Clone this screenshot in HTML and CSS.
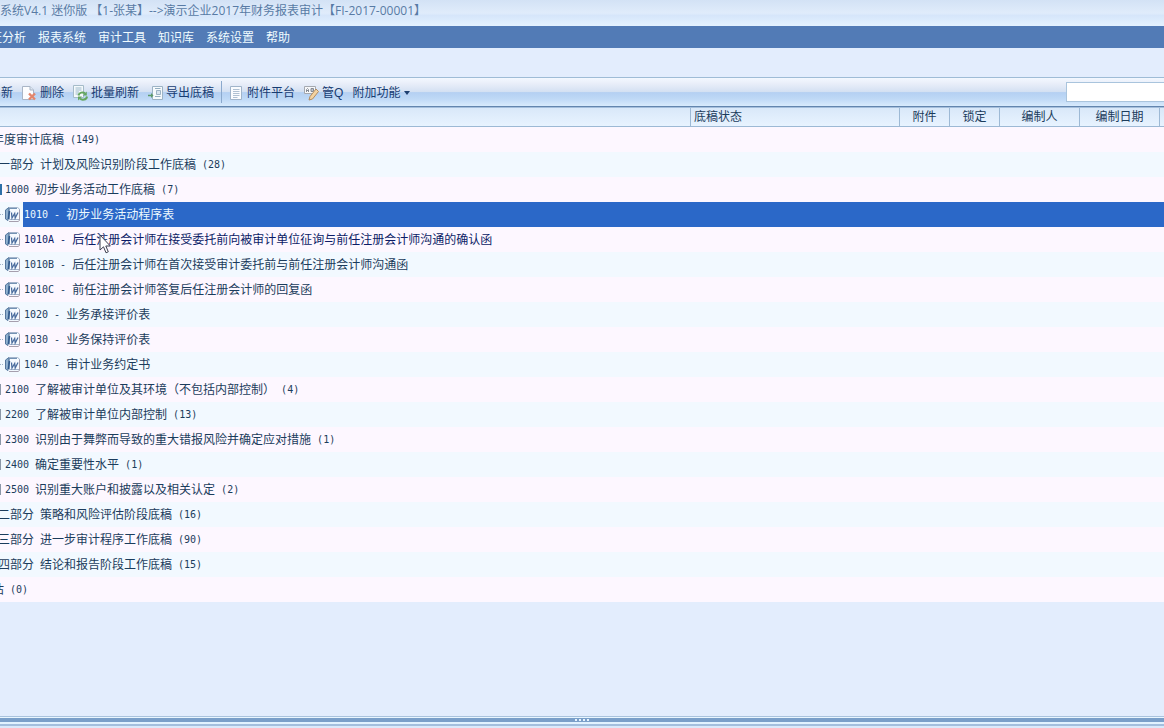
FILE: index.html
```
<!DOCTYPE html>
<html lang="zh-CN">
<head>
<meta charset="utf-8">
<title>审计系统</title>
<link rel="stylesheet" href="styles.css">
</head>
<body>
<svg class="sprite" aria-hidden="true">
  <symbol id="word" viewBox="0 0 16 16">
    <path d="M4.500 .5H12.500L14.500 2V12.500H4.500Z" fill="#f6faff" stroke="#a3b4cb"/>
    <path d="M14.500 3V13.500L13 14.500H4" fill="none" stroke="#a59fae"/>
    <path d="M4 .5L.5 3V12L3 13.500Z" fill="#8fb0d0" stroke="#54769c"/>
    <path d="M4 1.500H12" stroke="#7391b3"/>
    <path d="M4.500 4L3.500 12" stroke="#2f5a8e" stroke-width="1.500"/>
    <path d="M6.500 5.500L7 11L9.700 6.500L10.200 11L13 5.500" fill="none" stroke="#4a6c9e" stroke-width="1.300"/>
  </symbol>
</svg>
<header class="titlebar">系统V4.1 迷你版 【1-张某】--&gt;演示企业2017年财务报表审计【FI-2017-00001】</header>
<nav class="menubar">
  <button class="menu menu-cut">证分析</button>
  <button class="menu">报表系统</button>
  <button class="menu">审计工具</button>
  <button class="menu">知识库</button>
  <button class="menu">系统设置</button>
  <button class="menu">帮助</button>
</nav>
<div class="spacer"></div>
<div class="toolbar">
  <button class="tool">新</button>
  <button class="tool">
    <svg class="icon" viewBox="0 0 16 16"><path d="M.5 1.500H8L11.500 5V14.500H.5Z" fill="#fcfdff" stroke="#a9b5c6"/><path d="M8 1.500V5H11.500" fill="#dfe8f3" stroke="#a9b5c6"/><path d="M7 8.500L13 14.500M13 8.500L7 14.500" stroke="#e2866d" stroke-width="2.400"/></svg>
    删除</button>
  <button class="tool">
    <svg class="icon" viewBox="0 0 16 16"><path d="M.5 .5H10.500V12.500H.5Z" fill="#f4f9fb" stroke="#a5bbc8"/><path d="M2.500 3H8.500M2.500 5H8.500M2.500 7H6M2.500 9H5" stroke="#9db9cb"/><path d="M5.500 10.500C6 7.500 10 6.500 12 8.500M14 11.500C13.500 15 9 15.500 7 13.500" fill="none" stroke="#65a65e" stroke-width="2"/><path d="M13.800 6.500V10.500H9.800ZM5 15.500V11.500H9Z" fill="#65a65e"/></svg>
    批量刷新</button>
  <button class="tool">
    <svg class="icon" viewBox="0 0 16 16"><path d="M4.500 1.500H14.500V14.500H4.500Z" fill="#f6fafc" stroke="#9cb3c5"/><path d="M7 3.500H12.500M7 11.500H12.500" stroke="#93adc0"/><path d="M8.500 5.500H12.500V9.500H8.500Z" fill="#d8e4ee" stroke="#9cb3c5"/><path d="M0 10.500H4" stroke="#5d9a6a" stroke-width="1.500"/><path d="M3 8L5.500 10.500L3 13Z" fill="#5d9a6a"/></svg>
    导出底稿</button>
  <span class="divider"></span>
  <button class="tool">
    <svg class="icon" viewBox="0 0 16 16"><path d="M1.500 1.500H12.500V14.500H1.500Z" fill="#fafcff" stroke="#a0b4ca"/><path d="M4 4.500H10.500M4 6.500H10.500M4 8.500H10.500M4 10.500H10.500M4 12.500H8.500" stroke="#b0c1d3"/></svg>
    附件平台</button>
  <button class="tool">
    <svg class="icon" viewBox="0 0 16 16"><path d="M.5 1.500H11.500V8.500H.5Z" fill="#f7f8fa" stroke="#a5a9b0"/><path d="M2.500 7V4.500L3.500 3.500L4.500 4.500V7M2.500 5.500H4.500M7 3.500V6.500H9.500V3.500ZM7 5H9.500" fill="none" stroke="#858b95"/><path d="M12 4L14.500 6.500L8.500 14L5 15L6 11.500Z" fill="#f3d3a2" stroke="#b48c60"/></svg>
    管Q</button>
  <button class="tool">附加功能
    <svg class="caret" viewBox="0 0 6 4"><path d="M0 0H6L3 4Z" fill="#1d3f70"/></svg></button>
  <input class="search" type="text" aria-label="搜索">
</div>
<main class="content">
<table class="tree">
  <colgroup><col><col class="c-state"><col class="c-small"><col class="c-small"><col class="c-mid"><col class="c-mid"><col class="c-end"></colgroup>
  <thead><tr><th></th><th class="left">底稿状态</th><th>附件</th><th>锁定</th><th>编制人</th><th>编制日期</th><th></th></tr></thead>
  <tbody>
  <tr><td colspan="7"><div class="row year"><span>年度审计底稿</span><span class="num">(149)</span></div></td></tr>
  <tr><td colspan="7"><div class="row part"><span>一部分</span><span>计划及风险识别阶段工作底稿</span><span class="num">(28)</span></div></td></tr>
  <tr><td colspan="7"><div class="row group open"><span class="num">1000</span><span>初步业务活动工作底稿</span><span class="num">(7)</span></div></td></tr>
  <tr><td colspan="7"><div class="row doc"><svg class="icon"><use href="#word"/></svg><div class="label selected"><span class="num">1010 -</span><span>初步业务活动程序表</span></div></div></td></tr>
  <tr><td colspan="7"><div class="row doc"><svg class="icon"><use href="#word"/></svg><div class="label hover"><span class="num">1010A -</span><span>后任注册会计师在接受委托前向被审计单位征询与前任注册会计师沟通的确认函</span></div>
    <svg class="pointer" viewBox="0 0 12 20"><path d="M1 1V16L4.500 12.800L7 18.800L9.300 17.800L6.800 12H11.300Z" fill="#fff" stroke="#3d4050"/></svg></div></td></tr>
  <tr><td colspan="7"><div class="row doc"><svg class="icon"><use href="#word"/></svg><div class="label"><span class="num">1010B -</span><span>后任注册会计师在首次接受审计委托前与前任注册会计师沟通函</span></div></div></td></tr>
  <tr><td colspan="7"><div class="row doc"><svg class="icon"><use href="#word"/></svg><div class="label"><span class="num">1010C -</span><span>前任注册会计师答复后任注册会计师的回复函</span></div></div></td></tr>
  <tr><td colspan="7"><div class="row doc"><svg class="icon"><use href="#word"/></svg><div class="label"><span class="num">1020 -</span><span>业务承接评价表</span></div></div></td></tr>
  <tr><td colspan="7"><div class="row doc"><svg class="icon"><use href="#word"/></svg><div class="label"><span class="num">1030 -</span><span>业务保持评价表</span></div></div></td></tr>
  <tr><td colspan="7"><div class="row doc"><svg class="icon"><use href="#word"/></svg><div class="label"><span class="num">1040 -</span><span>审计业务约定书</span></div></div></td></tr>
  <tr><td colspan="7"><div class="row group"><span class="num">2100</span><span>了解被审计单位及其环境（不包括内部控制）</span><span class="num">(4)</span></div></td></tr>
  <tr><td colspan="7"><div class="row group"><span class="num">2200</span><span>了解被审计单位内部控制</span><span class="num">(13)</span></div></td></tr>
  <tr><td colspan="7"><div class="row group"><span class="num">2300</span><span>识别由于舞弊而导致的重大错报风险并确定应对措施</span><span class="num">(1)</span></div></td></tr>
  <tr><td colspan="7"><div class="row group"><span class="num">2400</span><span>确定重要性水平</span><span class="num">(1)</span></div></td></tr>
  <tr><td colspan="7"><div class="row group"><span class="num">2500</span><span>识别重大账户和披露以及相关认定</span><span class="num">(2)</span></div></td></tr>
  <tr><td colspan="7"><div class="row part"><span>二部分</span><span>策略和风险评估阶段底稿</span><span class="num">(16)</span></div></td></tr>
  <tr><td colspan="7"><div class="row part"><span>三部分</span><span>进一步审计程序工作底稿</span><span class="num">(90)</span></div></td></tr>
  <tr><td colspan="7"><div class="row part"><span>四部分</span><span>结论和报告阶段工作底稿</span><span class="num">(15)</span></div></td></tr>
  <tr><td colspan="7"><div class="row year"><span>估</span><span class="num">(0)</span></div></td></tr>
  </tbody>
</table>
</main>
<footer class="splitter"><div class="grip"><i></i><i></i><i></i><i></i></div></footer>
</body>
</html>
```

FILE: styles.css
```
* { box-sizing: border-box; }
body {
  margin: 0;
  min-height: 100vh;
  display: flex;
  flex-direction: column;
  overflow: hidden;
  background: #e3edfd;
  color: #1b3c5c;
  font: 12px/16px "Liberation Sans", "Noto Sans CJK SC", sans-serif;
  white-space: nowrap;
}
button, input { font: inherit; color: inherit; }
button { margin: 0; padding: 0; border: 0; background: none; }
.sprite { display: none; }
.icon { width: 16px; height: 16px; flex: none; }

.titlebar {
  height: 26px;
  padding-top: 3px;
  background: linear-gradient(#d3e2f5, #e0ecfb 50%, #d6e6fa 60%, #e4f2ff);
  color: #587ba5;
  font-family: "Open Sans", "Noto Sans CJK SC", sans-serif;
}
.menubar {
  display: flex;
  align-items: center;
  gap: 12px;
  height: 22px;
  padding-top: 2px;
  background: #527bb6;
  color: #f0fbff;
}
.menu-cut { margin-left: -10px; }
.spacer { height: 29px; }
.toolbar {
  display: flex;
  align-items: center;
  gap: 9px;
  height: 30px;
  padding-left: 1px;
  border-top: 1px solid #9fbcd6;
  border-bottom: 1px solid #6285ae;
  background: linear-gradient(#f3f8ff, #e9eef9 20%, #d3e0f2 50%, #b4d0f2 52%, #bfd9f6 75%, #d8eafc);
  color: #173c72;
}
.tool { display: flex; align-items: center; gap: 2px; padding-top: 1px; }
.caret { width: 6px; height: 4px; margin-left: 2px; }
.divider { width: 1px; height: 22px; margin: 0 -2px; background: #8ba9cd; }
.search {
  width: 98px;
  height: 20px;
  margin-left: auto;
  padding: 0 4px;
  border: 1px solid #a9c4dd;
  border-right: 0;
  background: #fff;
}

.content { flex: 1; border-top: 1px solid #a5bfdc; }
.tree { width: 100%; table-layout: fixed; border-collapse: separate; border-spacing: 0; }
.c-state { width: 209px; }
.c-small { width: 50px; }
.c-mid { width: 80px; }
.c-end { width: 5px; }
.tree th {
  height: 19px;
  padding: 0;
  border-bottom: 1px solid #9db9d5;
  border-left: 1px solid #9db9d5;
  background: linear-gradient(#d9e8f9, #e8f3ff);
  font-weight: normal;
}
.tree th:first-child { border-left: 0; }
.tree .left { padding-left: 3px; text-align: left; }
.tree td { padding: 0; background: #fdf7ff; }
.tree tr:nth-child(even) td { background: #f2f9ff; }
.row { position: relative; display: flex; align-items: center; gap: 6px; height: 25px; }
.num { font: 10px/16px "DejaVu Sans Mono", monospace; }
.year > :first-child { margin-left: -8px; }
.part > :first-child { margin-left: -2px; }
.group {
  padding-left: 4px;
  border-left: 1px solid;
  border-image: linear-gradient(transparent 28%, #8b97a8 28%, #8b97a8 72%, transparent 72%) 1;
}
.open {
  padding-left: 3px;
  border-left-width: 2px;
  border-image: linear-gradient(transparent 28%, #2f6fa8 28%, #2f6fa8 72%, transparent 72%) 1;
}
.doc { gap: 2px; }
.doc::before { content: ""; width: 3px; border-top: 1px dotted #9fb2c8; }
.doc .label { display: flex; align-items: center; gap: 6px; flex: 1; height: 25px; padding-left: 1px; }
.selected { background: #2b68c8; color: #eefaff; }
.hover { color: #0c1c66; }
.pointer { position: absolute; left: 99px; top: 7px; width: 12px; height: 20px; z-index: 1; }

.splitter {
  height: 12px;
  border-top: 1px solid #a9c3de;
  background: linear-gradient(#e9f6ff 1px, #7a9fc9 1px, #7a9fc9 5px, #e1f2ff 5px, #e1f2ff 7px, #a3bfde 7px, #a3bfde 9px, #dbe9fb 9px);
}
.grip { display: flex; justify-content: center; gap: 2px; padding-top: 2px; }
.grip i { width: 2px; height: 2px; background: #e6f3ff; }
```
